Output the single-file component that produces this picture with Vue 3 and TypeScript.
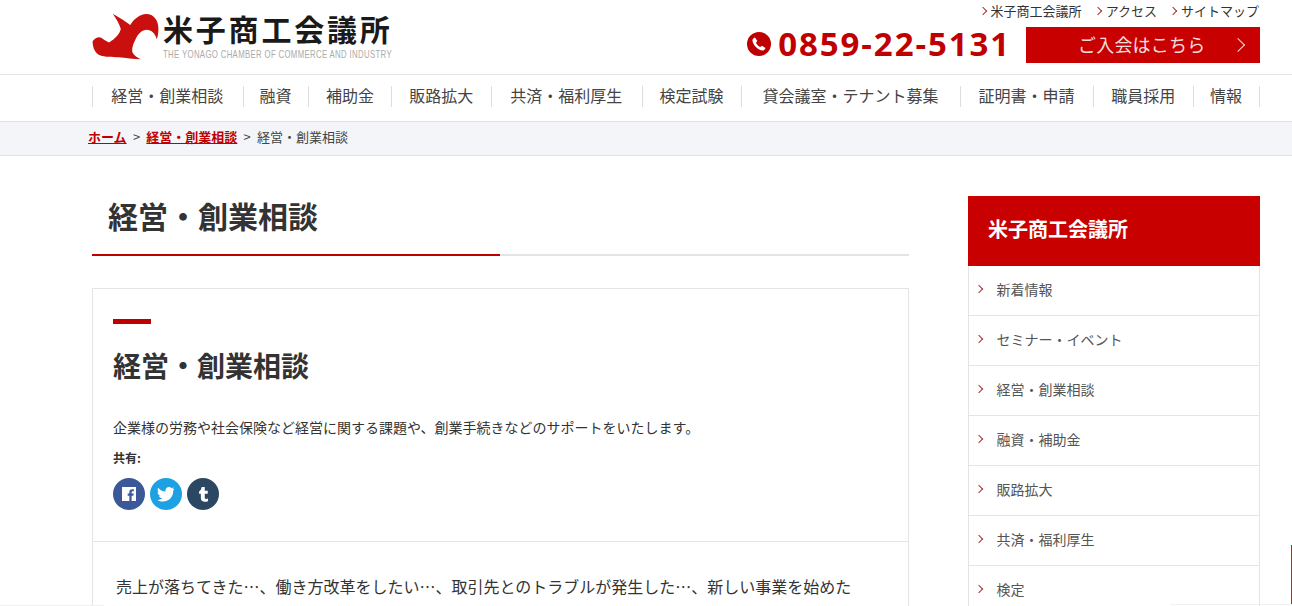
<template>
  <div class="page">
    <header class="site-header">
      <a class="logo" href="#">
        <svg class="logo-mark" viewBox="11 14 198 140" width="67" height="47">
          <path d="M72 16 C90 26 110 38 124 50 C135 32 152 18 172 17 C194 17 208 36 208 60 C208 72 207 82 203 92 C199 76 188 64 172 64 C156 66 147 78 140 92 C132 108 128 120 131 132 C136 142 145 148 156 152 C135 151 110 148 90 146 C70 145 48 146 34 140 C20 134 12 118 12 98 C20 88 30 84 38 88 C46 94 54 99 61 102 C78 92 92 78 96 62 C92 46 82 30 72 16 Z" fill="#c9100f" />
        </svg>
        <span class="logo-text">
          <span class="logo-ja">米子商工会議所</span>
          <span class="logo-en"><span>THE YONAGO CHAMBER OF COMMERCE AND INDUSTRY</span></span>
        </span>
      </a>
      <div class="header-right">
        <ul class="sub-links">
          <li v-for="link in subLinks" :key="link"><i class="chev"></i>{{ link }}</li>
        </ul>
        <div class="contact">
          <div class="tel">
            <svg viewBox="0 0 24 24" width="24" height="24">
              <circle cx="12" cy="12" r="12" fill="#c00000" />
              <path d="M8 5.5 L10.3 9 L9 10.8 C9.7 12.4 11.4 14.2 13.2 15 L15 13.7 L18.5 16 C18 17.8 16.5 18.8 15 18.5 C10.5 17.5 6.5 13.5 5.5 9 C5.2 7.5 6.2 6 8 5.5 Z" fill="#fff" />
            </svg>
            <span>0859-22-5131</span>
          </div>
          <a class="join" href="#">
            <span>ご入会はこちら</span>
            <i class="join-chev"></i>
          </a>
        </div>
      </div>
    </header>

    <nav class="global-nav">
      <a v-for="item in navItems" :key="item" href="#" :style="{ flexGrow: item.length }">{{ item }}</a>
    </nav>

    <div class="breadcrumb">
      <a href="#">ホーム</a><span class="sep">&gt;</span><a href="#">経営・創業相談</a><span class="sep">&gt;</span><span>経営・創業相談</span>
    </div>

    <div class="content">
      <main class="main-col">
        <h1 class="page-title">経営・創業相談</h1>
        <article class="card">
          <div class="card-head">
            <div class="accent"></div>
            <h2>経営・創業相談</h2>
            <p class="lead">企業様の労務や社会保険など経営に関する課題や、創業手続きなどのサポートをいたします。</p>
            <div class="share-label">共有:</div>
            <div class="share">
              <a class="fb" href="#">
                <svg viewBox="0 0 16 16" width="14" height="14">
                  <path d="M0 0 H16 V16 H11 V10 H13 L13.4 7.5 H11 V6 C11 5.2 11.4 4.8 12.2 4.8 H13.5 V2.6 H11.6 C9.5 2.6 8.4 3.8 8.4 5.8 V7.5 H6.5 V10 H8.4 V16 H0 Z" fill="#fff" />
                </svg>
              </a>
              <a class="tw" href="#">
                <svg viewBox="0 0 24 24" width="18" height="18">
                  <path d="M23 5 C22.2 5.4 21.3 5.6 20.4 5.7 C21.4 5.1 22.1 4.2 22.5 3.1 C21.6 3.6 20.6 4 19.5 4.2 C18.6 3.3 17.4 2.7 16 2.7 C13.4 2.7 11.2 4.9 11.2 7.5 C11.2 7.9 11.3 8.3 11.3 8.6 C7.3 8.4 3.8 6.5 1.5 3.6 C1.1 4.3 0.9 5.1 0.9 6 C0.9 7.7 1.7 9.1 3 10 C2.2 10 1.5 9.8 0.8 9.4 V9.5 C0.8 11.8 2.5 13.8 4.7 14.2 C3.9 14.4 3.2 14.4 2.5 14.3 C3.1 16.2 4.9 17.6 7 17.7 C4.8 19.4 2.7 20.1 0.5 19.9 C2.7 21.3 5.2 22 7.9 22 C16.8 22 21.6 14.7 21.6 8.3 V7.7 C22.1 6.9 22.7 6 23 5 Z" fill="#fff" />
                </svg>
              </a>
              <a class="tb" href="#">
                <svg viewBox="0 0 16 16" width="17" height="17">
                  <path d="M6.2 1 H9.2 V4.5 H12 V7.2 H9.2 V10.8 C9.2 12.2 10.4 12.6 12.2 11.8 V14.3 C8.5 15.8 5.5 14.5 5.5 11.3 V7.2 H3.8 V5.2 C5.2 4.7 6 3 6.2 1 Z" fill="#fff" />
                </svg>
              </a>
            </div>
          </div>
          <div class="card-body">
            売上が落ちてきた…、働き方改革をしたい…、取引先とのトラブルが発生した…、新しい事業を始めた
          </div>
        </article>
      </main>

      <aside class="side-col">
        <div class="side-title">米子商工会議所</div>
        <ul class="side-list">
          <li v-for="item in sideItems" :key="item"><i class="chev"></i>{{ item }}</li>
        </ul>
      </aside>
    </div>

    <div class="edge-bar"></div>
    <div class="edge-line left"></div>
    <div class="edge-line right"></div>
  </div>
</template>

<script setup lang="ts">
const subLinks: string[] = ['米子商工会議所', 'アクセス', 'サイトマップ'];

const navItems: string[] = [
  '経営・創業相談',
  '融資',
  '補助金',
  '販路拡大',
  '共済・福利厚生',
  '検定試験',
  '貸会議室・テナント募集',
  '証明書・申請',
  '職員採用',
  '情報',
];

const sideItems: string[] = [
  '新着情報',
  'セミナー・イベント',
  '経営・創業相談',
  '融資・補助金',
  '販路拡大',
  '共済・福利厚生',
  '検定',
];
</script>

<style>
html,
body {
  margin: 0;
  overflow: hidden;
  background: #fff;
}
</style>

<style scoped>
.page {
  position: relative;
  height: 606px;
  overflow: hidden;
  font-family: "Noto Sans CJK JP", "Liberation Sans", sans-serif;
  color: #333;
}

a {
  color: inherit;
  text-decoration: none;
}

ul {
  list-style: none;
  margin: 0;
  padding: 0;
}

.site-header {
  display: flex;
  justify-content: space-between;
  height: 74px;
  padding: 0 32px 0 92px;
  border-bottom: 1px solid #e4e4e4;
}

.logo {
  display: flex;
  gap: 4px;
  padding-top: 13px;
  align-items: flex-start;
}

.logo-text {
  display: flex;
  flex-direction: column;
}

.logo-ja {
  font-size: 30px;
  font-weight: 700;
  line-height: 30px;
  letter-spacing: 2.8px;
  color: #1a1a1a;
}

.logo-en {
  display: block;
  width: 228px;
  height: 12px;
  margin-top: 5px;
  font-family: "Liberation Sans", sans-serif;
  font-size: 11px;
  line-height: 12px;
  color: #aaa;
  white-space: nowrap;
}

.logo-en span {
  display: inline-block;
  letter-spacing: 0.5px;
  transform: scaleX(0.706);
  transform-origin: left center;
}

.header-right {
  display: flex;
  flex-direction: column;
  align-items: flex-end;
}

.sub-links {
  display: flex;
  gap: 13px;
  height: 27px;
  padding: 2px 1px 0 0;
  box-sizing: border-box;
  font-size: 13px;
  line-height: 18px;
}

.chev {
  display: inline-block;
  width: 5px;
  height: 5px;
  margin: 0 5px 2px 0;
  border-top: 1px solid #a83232;
  border-right: 1px solid #a83232;
  transform: rotate(45deg);
}

.contact {
  display: flex;
  align-items: center;
  gap: 15px;
}

.tel {
  display: flex;
  align-items: center;
  gap: 7px;
  margin-top: -3px;
  font-family: "Open Sans", sans-serif;
  font-size: 33px;
  font-weight: 700;
  letter-spacing: 1.9px;
  line-height: 36px;
  color: #c00000;
}

.join {
  display: flex;
  align-items: center;
  justify-content: space-between;
  box-sizing: border-box;
  width: 234px;
  height: 36px;
  padding: 0 17px 3px 52px;
  background: #c80000;
  color: #f5dcdc;
  font-size: 18px;
  letter-spacing: 0.2px;
}

.join-chev {
  width: 9px;
  height: 9px;
  margin-top: 3px;
  border-top: 1px solid #f5dcdc;
  border-right: 1px solid #f5dcdc;
  transform: rotate(45deg);
}

.global-nav {
  display: flex;
  height: 46px;
  box-sizing: border-box;
  padding-bottom: 3px;
  align-items: center;
  margin: 0 32px 0 92px;
}

.global-nav a {
  flex: 1 1 auto;
  padding: 0 16px 2px 15px;
  text-align: center;
  font-size: 16px;
  line-height: 19px;
  color: #444;
  border-left: 1px solid #ddd;
}

.global-nav a:last-child {
  border-right: 1px solid #ddd;
}

.breadcrumb {
  display: flex;
  align-items: center;
  box-sizing: content-box;
  height: 28px;
  padding: 0 0 5px 88px;
  background: #f3f5f8;
  border-top: 1px solid #e2e2e2;
  border-bottom: 1px solid #e2e2e2;
  font-size: 13px;
  color: #444;
}

.breadcrumb a {
  color: #c00000;
  font-weight: 700;
  text-decoration: underline;
}

.sep {
  margin: 0 6.25px;
}

.content {
  display: grid;
  grid-template-columns: 817px 292px;
  column-gap: 59px;
  padding: 40px 0 0 92px;
}

.page-title {
  margin: 0;
  height: 58px;
  padding-left: 16px;
  font-size: 30px;
  font-weight: 700;
  line-height: 38px;
  color: #333;
  border-bottom: 2px solid #e4e4e4;
  position: relative;
}

.page-title::after {
  content: "";
  position: absolute;
  left: 0;
  bottom: -2px;
  width: 408px;
  height: 2px;
  background: #bf0000;
}

.card {
  margin-top: 32px;
  border: 1px solid #e4e4e4;
}

.card-head {
  padding: 30px 20px 31px;
  border-bottom: 1px solid #e4e4e4;
}

.accent {
  width: 38px;
  height: 5px;
  background: #bf0000;
}

h2 {
  margin: 21px 0 0;
  font-size: 28px;
  font-weight: 700;
  line-height: 40px;
  color: #333;
}

.lead {
  margin: 32px 0 0;
  font-size: 14px;
  line-height: 20px;
}

.share-label {
  margin-top: 12px;
  font-size: 12px;
  font-weight: 700;
  line-height: 18px;
}

.share {
  display: flex;
  gap: 5px;
  margin-top: 11px;
}

.share a {
  display: flex;
  align-items: center;
  justify-content: center;
  width: 32px;
  height: 32px;
  border-radius: 50%;
}

.fb {
  background: #3b5998;
}

.tw {
  background: #1da1e2;
}

.tb {
  background: #2c4762;
}

.card-body {
  padding: 31px 23px;
  font-size: 16px;
  line-height: 26px;
  white-space: nowrap;
  overflow: hidden;
}

.side-title {
  display: flex;
  align-items: center;
  box-sizing: border-box;
  height: 70px;
  padding: 0 0 6px 20px;
  background: #c80000;
  color: #fff;
  font-size: 20px;
  font-weight: 700;
}

.side-list {
  border-left: 1px solid #e4e4e4;
  border-right: 1px solid #e4e4e4;
}

.side-list li {
  display: flex;
  align-items: center;
  box-sizing: border-box;
  height: 50px;
  padding: 0 0 3px 7px;
  border-bottom: 1px solid #e4e4e4;
  font-size: 14px;
  color: #555;
}

.side-list .chev {
  margin: 0 14.5px 0 0;
}

.edge-bar {
  position: absolute;
  right: 0;
  top: 545px;
  width: 1px;
  height: 60px;
  background: #8a3a3a;
}

.edge-line {
  position: absolute;
  height: 1px;
  background: #eef0f4;
}

.edge-line.left {
  left: 0;
  width: 104px;
  bottom: 0;
}

.edge-line.right {
  left: 1170px;
  right: 0;
  bottom: 1px;
}
</style>
